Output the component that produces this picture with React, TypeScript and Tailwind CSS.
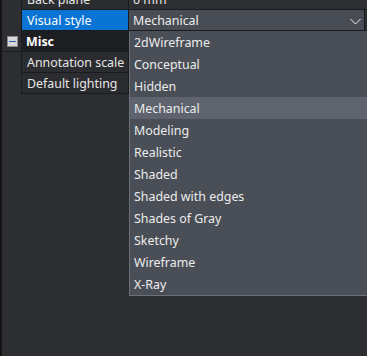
import React from 'react';

const styles = [
  '2dWireframe',
  'Conceptual',
  'Hidden',
  'Mechanical',
  'Modeling',
  'Realistic',
  'Shaded',
  'Shaded with edges',
  'Shades of Gray',
  'Sketchy',
  'Wireframe',
  'X-Ray',
];

const font = { fontFamily: '"Noto Sans", "DejaVu Sans", sans-serif' };

const Row: React.FC<{ label: string; value?: string; selected?: boolean }> = ({ label, value, selected }) => (
  <div className="flex h-[21px] border-b border-[#1b1c1f]">
    <div
      className={`w-[107px] shrink-0 pl-[5px] pt-[2px] flex items-center border-r border-[#1b1c1f] ${
        selected ? 'bg-[#0a74d4] text-white' : 'bg-[#2b2c30] text-[#e6e6e6]'
      }`}
    >
      {label}
    </div>
    <div className="flex-1 pl-[4px] pt-[2px] flex items-center bg-[#2e2f33] text-[#e6e6e6]">{value}</div>
  </div>
);

export default function App() {
  const active = 'Mechanical';
  return (
    <div
      className="relative w-[367px] h-[356px] overflow-hidden bg-[#2d2e32] flex text-[12.4px] leading-none"
      style={font}
    >
      <div className="w-[2px] shrink-0 bg-[#141416]" />
      <div className="flex-1 flex flex-col">
        <div className="flex -mt-[11px]">
          <div className="w-[19px] shrink-0" />
          <div className="flex-1 flex flex-col border-l border-[#1b1c1f]">
            <Row label="Back plane" value="0 mm" />
            <Row label="Visual style" selected />
          </div>
        </div>
        <div className="flex h-[21px] border-b border-[#1b1c1f] bg-[#1d1e21]">
          <div className="w-[19px] shrink-0 flex items-center pl-[5px] bg-[#2d2e32]">
            <div className="w-[11px] h-[11px] bg-[#d9d9d9] border border-[#8a8a8a] flex items-center justify-center">
              <div className="w-[7px] h-[1px] bg-[#2a5ea8]" />
            </div>
          </div>
          <div className="flex-1 pl-[4px] pt-[2px] flex items-center font-bold text-white border-l border-[#1b1c1f]">Misc</div>
        </div>
        <div className="flex">
          <div className="w-[19px] shrink-0" />
          <div className="flex-1 flex flex-col border-l border-[#1b1c1f]">
            <Row label="Annotation scale" />
            <Row label="Default lighting" />
          </div>
        </div>
      </div>

      {/* combobox */}
      <div className="absolute left-[129px] top-[9px] w-[236px] h-[22px] bg-[#484d55] border-t border-r border-b border-[#1a1b1e] flex items-center pl-[4px] pt-[2px] text-[#ececec]">
        {active}
        <svg className="absolute right-[3px] top-[8px]" width="11" height="7" viewBox="0 0 11 7">
          <path d="M0.5 1 L5.5 6 L10.5 1" fill="none" stroke="#f2f2f2" strokeWidth="1" />
        </svg>
      </div>

      {/* dropdown list */}
      <div className="absolute left-[129px] top-[31px] w-[240px] bg-[#4a4f57] border-l border-b border-[#6c7078] flex flex-col">
        {styles.map((s) => (
          <div
            key={s}
            className={`h-[22px] pl-[4px] pt-[2px] flex items-center text-[#ececec] ${s === active ? 'bg-[#5e636d]' : ''}`}
          >
            {s}
          </div>
        ))}
      </div>
    </div>
  );
}
